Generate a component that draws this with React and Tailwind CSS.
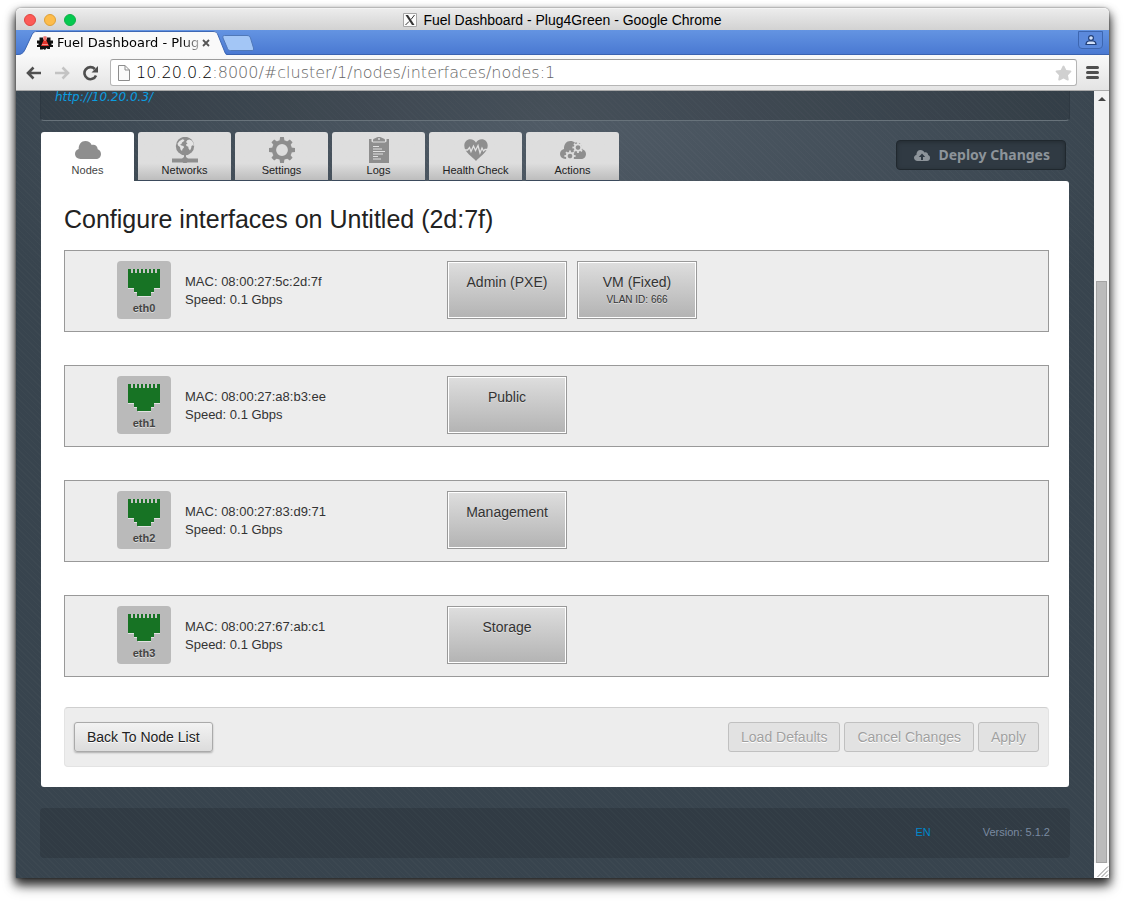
import React from "react";
import { FaStar } from "react-icons/fa";

function CloudIcon() {
  return (
    <svg viewBox="0 0 26 18" className="h-[18px] w-[26px] fill-[#8e8e8e]" aria-hidden="true">
      <path d="M5.500 18C2.300 18 0 15.700 0 12.800c0-2.400 1.500-4.300 3.700-4.900C3.500 3.300 6.400 0 10.300 0c3 0 5.300 1.600 6.400 4 3-1 6 1 6 4.200 2 .7 3.300 2.500 3.300 4.700 0 2.900-2.200 5.100-5 5.100z" />
    </svg>
  );
}

function NetworkIcon() {
  return (
    <svg viewBox="0 0 26 26" className="h-[26px] w-[26px]" aria-hidden="true">
      <circle cx="13" cy="9" r="9.200" fill="#8e8e8e" />
      <path d="M5.500 6.500 7.500 4l3-1.700 2 .7-1 1.500-1.500 1-.5 1.500-1.500.8 1.500.7 2 .5.5 1.500-1.500 1.500-.5 2-1.500-1.500-.5-2.500L6 8.500z" fill="#e4e4e4" />
      <path d="m14 5 1.500-2 2-.5 2.500 1.300 1.500 2.700.3 2.400-1.300-.7-1 .7-.3 2.100-1.200 2.500-1.500-2-.2-1.800-1.800-.7-.5-1.500 1.500-1z" fill="#e4e4e4" />
      <path d="M12 18h2v2l2 1.500h10v4H15.500l-1 .5h-3l-1-.5H0v-4h10l2-1.500z" fill="#8e8e8e" />
    </svg>
  );
}

const TEETH = [0, 45, 90, 135, 180, 225, 270, 315];

function SettingsIcon() {
  return (
    <svg viewBox="0 0 26 26" className="h-[26px] w-[26px]" aria-hidden="true">
      <circle cx="13" cy="13" r="8" fill="none" stroke="#8e8e8e" strokeWidth="4.200" />
      {TEETH.map((a) => (
        <path key={a} d="M10.500 4 11.100 0h3.800l.6 4z" fill="#8e8e8e" transform={`rotate(${a} 13 13)`} />
      ))}
    </svg>
  );
}

function LogsIcon() {
  return (
    <svg viewBox="0 0 20 26" className="h-[26px] w-[20px]" aria-hidden="true">
      <path d="M0 2h20v24H0z" fill="#8e8e8e" />
      <path d="M2.500 1.500h15V4.500l-1.500 1H4l-1.500-1z" fill="#e0e0e0" />
      <path d="M4 4.500V2.500L6 1.200C7.500.3 8.800 0 10 0s2.500.3 4 1.200l2 1.300v2z" fill="#8e8e8e" />
      <circle cx="10" cy="2" r=".9" fill="#e0e0e0" />
      <path d="M4 9.500h6M4 12h9M4 14.500h12M4 17h10M4 19.500h5M4 22h8" stroke="#e0e0e0" strokeWidth="1.200" />
    </svg>
  );
}

function HealthIcon() {
  return (
    <svg viewBox="0 0 24 22" className="h-[22px] w-[24px]" aria-hidden="true">
      <path d="M12 22C9 18.500.3 13.500.3 6.800.3 2.800 3 .3 6.300.3c2.500 0 4.700 1.200 5.700 3.500C13 1.500 15.200.3 17.700.3c3.300 0 6 2.500 6 6.500C23.700 13.500 15 18.500 12 22z" fill="#8e8e8e" />
      <path d="M0 11h3.500l2-2.500 1.500 4 2.500-5.500 2 4.500 2.500-5 2 7.500 2-5 1.500 3 1.500-1.500H24" fill="none" stroke="#e0e0e0" strokeWidth="1.300" />
    </svg>
  );
}

function SmallGear({ x, y }) {
  return (
    <g transform={`translate(${x} ${y})`}>
      <circle r="3.200" fill="none" stroke="#dedede" strokeWidth="1.800" />
      {TEETH.map((a) => (
        <path key={a} d="M-.9-3.500h1.800v-2.100h-1.800z" fill="#dedede" transform={`rotate(${a})`} />
      ))}
    </g>
  );
}

function ActionsIcon() {
  return (
    <svg viewBox="0 0 26 18" className="h-[18px] w-[26px]" aria-hidden="true">
      <path d="M5.500 18C2.300 18 0 15.700 0 12.800c0-2.400 1.500-4.300 4-4.900C3.800 3.300 6.400 0 10.300 0c2 0 3.500.6 4.700 1.800C20 .5 22.500 4 22.200 8.200c2.500.7 3.800 2.500 3.800 4.700 0 2.900-2.200 5.100-5 5.100z" fill="#8e8e8e" />
      <SmallGear x={18} y={6.5} />
      <SmallGear x={10} y={15} />
    </svg>
  );
}

function PortIcon() {
  return (
    <svg viewBox="0 0 32 28" className="h-7 w-8" aria-hidden="true" shapeRendering="crispEdges">
      <path d="M0 1h32v19h-6v4h-3v4H10v-4H6v-4H0z" fill="#e2e2e2" />
      <path d="M0 0h32v19h-6v4h-3v4H9v-4H6v-4H0z" fill="#177324" />
      <path d="M4 0v4M8 0v4M12 0v4M16 0v4M20 0v4M24 0v4M28 0v4" stroke="#c4c4c4" strokeWidth="2" />
    </svg>
  );
}

const TABS = [
  ["Nodes", CloudIcon],
  ["Networks", NetworkIcon],
  ["Settings", SettingsIcon],
  ["Logs", LogsIcon],
  ["Health Check", HealthIcon],
  ["Actions", ActionsIcon],
];

const INTERFACES = [
  { name: "eth0", mac: "08:00:27:5c:2d:7f", nets: [["Admin (PXE)"], ["VM (Fixed)", "VLAN ID: 666"]] },
  { name: "eth1", mac: "08:00:27:a8:b3:ee", nets: [["Public"]] },
  { name: "eth2", mac: "08:00:27:83:d9:71", nets: [["Management"]] },
  { name: "eth3", mac: "08:00:27:67:ab:c1", nets: [["Storage"]] },
];

function TitleBar() {
  return (
    <div className="relative flex h-[22px] items-center justify-center gap-1.5 rounded-t-[5px] border-t border-[#f4f4f4] bg-linear-to-b from-[#ececec] to-[#d2d2d2]">
      <div className="absolute left-2 flex gap-2">
        <button aria-label="Close" className="size-3 rounded-full border border-[#e0443e] bg-[#fc5b57]" />
        <button aria-label="Minimize" className="size-3 rounded-full border border-[#dea035] bg-[#fdbc4b]" />
        <button aria-label="Zoom" className="size-3 rounded-full border border-[#10b048] bg-[#05c94f]" />
      </div>
      <svg viewBox="0 0 14 14" className="h-[14px] w-[14px]" aria-hidden="true">
        <path d="M.5.5h13v13H.5z" fill="#fbfbfb" stroke="#a6a6a6" />
        <path d="m2.500 2 6.500 10h2.500L5 2z" fill="#333" />
        <path d="M11.500 2 8 6.500M6 8.500 2.500 12" stroke="#333" strokeWidth="1" />
      </svg>
      <span className="text-[14px] leading-4 text-black">Fuel Dashboard - Plug4Green - Google Chrome</span>
    </div>
  );
}

function TabStrip() {
  return (
    <div className="flex h-[25px] items-end justify-between border-b border-[#3a62b0] bg-linear-to-b from-[#6494e2] to-[#4a79d2] font-['DejaVu_Sans',sans-serif]">
      <div className="flex items-end">
        <div className="relative -mb-px h-6 w-[211px]">
          <svg viewBox="0 0 211 24" preserveAspectRatio="none" className="absolute inset-0 h-full w-full" aria-hidden="true">
            <path d="M0 24c5 0 7-1 9-5l7-15C17.500 1 18.500 0 21 0h176c3 0 4 1 5 4l6 15c1 4 2 5 3 5z" fill="#f9f9f9" />
            <path d="M0 23.500c5 0 7-1 9-5l7-15C17.500 1 18.500.5 21 .5h176c3 0 4 1 5 3.500l6 15c1 3 2 4 3 4.500" fill="none" stroke="#3e68b4" />
          </svg>
          <div className="relative flex h-6 items-center justify-between pr-[15px] pl-[21px]">
            <div className="flex items-center gap-1">
              <svg viewBox="0 0 16 14" className="h-[14px] w-4 shrink-0" aria-hidden="true">
                <path d="M2.500 1.500h3.500v2h4v-2h3.500v3H16v3h-1.500v1.500H16v2h-3v2h-2.500l-1-1L8 14l-1.500-1-1 .5H3v-2.500H0V9h1.500V7.500H0v-3h2.500z" fill="#111" />
                <path d="M6.500.5h3v4l2.500 5.500H4l2.500-5.500z" fill="#e5342c" />
                <path d="M7.500 1h1v4h-1zM5 8h6v.8H5z" fill="#f7b0ac" />
              </svg>
              <span className="text-[13px] leading-4 whitespace-nowrap text-black mask-r-from-88% mask-r-to-105%">
                Fuel Dashboard - Plug
              </span>
            </div>
            <button aria-label="Close tab" className="flex size-3 shrink-0 items-center justify-center">
              <svg viewBox="0 0 8 8" className="size-2" aria-hidden="true">
                <path d="m1 1 6 6M7 1 1 7" stroke="#555" strokeWidth="1.800" />
              </svg>
            </button>
          </div>
        </div>
        <button aria-label="New tab" className="mb-[3px] -ml-[5px]">
          <svg viewBox="0 0 32 16" className="h-4 w-8" aria-hidden="true">
            <path d="M2.500.5H25c2 0 3 1 3.500 2.500L31.500 13c.4 1.500 0 2.500-1.500 2.500H8.500C7 15.500 6 15 5.500 13.500L1 3C.5 1.500 1 .5 2.500.5z" fill="#a3c6f6" stroke="#5078b8" />
          </svg>
        </button>
      </div>
      <button aria-label="Profile" className="mr-1.5 mb-[5px] flex h-[18px] w-[25px] items-center justify-center rounded-b border border-[#3d66b0] bg-[#5b89dc]">
        <svg viewBox="0 0 12 12" className="size-3" aria-hidden="true">
          <path d="M1 10.500c0-2 1-3.200 2.700-3.500h4.600C10 7.300 11 8.500 11 10.500z" fill="#d3e2fa" stroke="#223f78" strokeWidth="1.200" />
          <circle cx="6" cy="4" r="2.400" fill="#d3e2fa" stroke="#223f78" strokeWidth="1.200" />
        </svg>
      </button>
    </div>
  );
}

function Toolbar() {
  return (
    <div className="flex h-9 items-center border-b border-[#a9a9a9] bg-linear-to-b from-[#f9f9f9] to-[#e4e4e4] px-2.5 font-['DejaVu_Sans',sans-serif]">
      <button aria-label="Back">
        <svg viewBox="0 0 16 14" className="h-[14px] w-4" fill="none" aria-hidden="true">
          <path d="M15 7H2M7.500 1.500 2 7l5.500 5.500" stroke="#4f4f4f" strokeWidth="2.600" />
        </svg>
      </button>
      <button aria-label="Forward" className="ml-3">
        <svg viewBox="0 0 16 14" className="h-[14px] w-4" fill="none" aria-hidden="true">
          <path d="M1 7h13M8.500 1.500 14 7l-5.500 5.500" stroke="#c3c3c3" strokeWidth="2.600" />
        </svg>
      </button>
      <button aria-label="Reload" className="ml-3">
        <svg viewBox="0 0 17 16" className="h-4 w-[17px]" fill="none" aria-hidden="true">
          <path d="M14 10.500A6 6 0 1 1 12.800 4" stroke="#4f4f4f" strokeWidth="2.600" />
          <path d="M16 1v6.500H9.500z" fill="#4f4f4f" />
        </svg>
      </button>
      <div className="ml-[11px] flex h-[27px] min-w-0 flex-1 items-center rounded-[3px] border border-[#b5b5b5] border-t-[#9c9c9c] bg-white pr-1 pl-[7px]">
        <svg viewBox="0 0 12 16" className="mr-[6px] h-4 w-3 shrink-0" aria-hidden="true">
          <path d="M.5.5H7L11.500 5v10.500H.5z" fill="#fbfbfb" stroke="#8d8d8d" />
          <path d="M7 .5V5h4.500" fill="none" stroke="#8d8d8d" />
        </svg>
        <div className="min-w-0 flex-1 truncate text-[16px] leading-6 font-extralight text-[#666]">
          <span className="text-black">10.20.0.2</span>:8000/#cluster/1/nodes/interfaces/nodes:1
        </div>
        <button aria-label="Bookmark">
          <FaStar className="h-4 w-[17px] text-[#d0d0d0]" />
        </button>
      </div>
      <button aria-label="Menu" className="ml-[9px] flex w-[13px] flex-col gap-0.5">
        <span className="h-[3px] rounded-full bg-[#4f4f4f]" />
        <span className="h-[3px] rounded-full bg-[#4f4f4f]" />
        <span className="h-[3px] rounded-full bg-[#4f4f4f]" />
      </button>
    </div>
  );
}

function Interface({ name, mac, nets }) {
  return (
    <section className="flex border border-[#999] bg-[#ededed] pt-2.5 pb-3 pl-[52px]">
      <div className="flex h-[58px] w-[54px] flex-col items-center rounded bg-[#bababa] pt-2">
        <PortIcon />
        <span className="mt-1 text-[11px] leading-[14px] font-bold text-[#444] text-shadow-[0_1px_0_#ddd]">{name}</span>
      </div>
      <div className="ml-3.5 w-[262px] pt-3 text-[13px] leading-[18px] text-[#333]">
        <p>MAC: {mac}</p>
        <p>Speed: 0.1 Gbps</p>
      </div>
      <div className="flex gap-2.5">
        {nets.map(([label, vlan]) => (
          <div
            key={label}
            className="h-[58px] w-[120px] border border-[#999] bg-linear-to-b from-[#dedede] to-[#b3b3b3] pt-[11px] text-center text-[#333] shadow-[inset_0_0_0_1px_#fff] text-shadow-[0_1px_0_#ddd]"
          >
            <p className="text-[14px] leading-[18px]">{label}</p>
            {vlan && <p className="text-[10px] leading-[18px]">{vlan}</p>}
          </div>
        ))}
      </div>
    </section>
  );
}

function FormButton({ children, disabled }) {
  return (
    <button
      disabled={disabled}
      className={
        disabled
          ? "h-[30px] rounded-[3px] border border-[#c0c0c0] bg-[#e2e2e2] px-3 text-[14px] leading-5 text-[#a0a0a0] text-shadow-[0_1px_0_#fff]"
          : "h-[30px] rounded-[3px] border border-[#aaa] bg-linear-to-b from-[#f3f3f3] to-[#dcdcdc] px-3 text-[14px] leading-5 text-[#222] shadow-[0_1px_2px_#0004] text-shadow-[0_1px_0_#fff]"
      }
    >
      {children}
    </button>
  );
}

function Scrollbar() {
  return (
    <div className="flex w-[15px] shrink-0 flex-col bg-[#f1f1f1]">
      <button aria-label="Scroll up" className="flex h-[15px] items-center justify-center">
        <svg viewBox="0 0 8 4" className="h-1 w-2" aria-hidden="true">
          <path d="M4 0 8 4H0z" fill="#444" />
        </svg>
      </button>
      <div className="flex-[175]" />
      <div className="mx-0.5 flex-[582] border border-[#a4a4a4] bg-[#bbb]" />
      <svg viewBox="0 0 15 15" className="size-[15px] bg-white" aria-hidden="true">
        <path d="M3.500 14 14 3.500M7.500 14 14 7.500M11.500 14l2.500-2.500" stroke="#8a8a8a" />
      </svg>
    </div>
  );
}

export default function App() {
  return (
    <div className="min-h-screen bg-white px-4 pt-2 pb-6 font-['Liberation_Sans',sans-serif]">
      <div className="rounded-t-[5px] shadow-[0_0_2px_#0008,0_5px_10px_1px_#000b,0_8px_14px_#0006]">
        <TitleBar />
        <TabStrip />
        <Toolbar />
        <div className="flex">
          <div className="min-w-0 flex-1 overflow-hidden bg-[repeating-linear-gradient(45deg,#ffffff05_0_1px,transparent_1px_4px),radial-gradient(ellipse_600px_300px_at_50%_30px,#505b66,#38444e)] px-6 pb-5">
            <header className="-mt-1 rounded-b border border-t-0 border-[#2f3942] border-b-[#68737b] bg-[#0000001f] px-3.5 pb-[13px] font-['DejaVu_Sans',sans-serif] text-[12px] leading-5 italic">
              <a href="http://10.20.0.3/" className="text-[#0b9ee0]">http://10.20.0.3/</a>
            </header>
            <div className="flex items-end justify-between px-px pt-[11px]">
              <div role="tablist" className="flex gap-1">
                {TABS.map(([label, Icon], i) => (
                  <button
                    key={label}
                    role="tab"
                    aria-selected={i === 0}
                    className={
                      i === 0
                        ? "flex h-[49px] w-[93px] flex-col items-center rounded-t-[3px] bg-white text-[#444]"
                        : "flex h-[49px] w-[93px] flex-col items-center rounded-t-[3px] border-b border-[#3b4a5c] bg-linear-to-b from-[#dedede] from-65% to-[#bdbdbd] text-[#222]"
                    }
                  >
                    <span className="mt-[5px] flex h-[26px] items-center">
                      <Icon />
                    </span>
                    <span className="text-[11px] leading-[14px]">{label}</span>
                  </button>
                ))}
              </div>
              <button
                disabled
                className="mr-[3px] mb-[11px] flex h-[30px] items-center gap-1.5 rounded border border-[#20282e] bg-[#303a43] px-[15px] font-['Noto_Sans',sans-serif] text-[14px] leading-5 font-bold text-[#8d949a] shadow-[inset_0_1px_4px_#0004]"
              >
                <svg viewBox="0 0 16 11" className="mx-0.5 h-[11px] w-4" aria-hidden="true">
                  <path d="M3.500 11C1.500 11 0 9.700 0 7.800 0 6.300 1 5.200 2.400 4.900 2.300 2 4.100 0 6.500 0c1.900 0 3.300 1 4 2.500 1.900-.6 3.600.6 3.600 2.600C15.300 5.500 16 6.600 16 7.900 16 9.700 14.700 11 13 11z" fill="#8d949a" />
                  <path d="M8 3.500 4.800 7H7v3h2V7h2.200z" fill="#303a43" />
                </svg>
                Deploy Changes
              </button>
            </div>
            <main className="mx-px rounded-tr-[3px] rounded-b-[3px] bg-white pt-[22px] pr-5 pb-5 pl-[23px]">
              <h1 className="text-[25px] leading-8 text-[#222]">Configure interfaces on Untitled (2d:7f)</h1>
              <div className="mt-[15px] flex flex-col gap-[33px]">
                {INTERFACES.map((nic) => (
                  <Interface key={nic.name} {...nic} />
                ))}
              </div>
              <div className="mt-[30px] flex items-center justify-between rounded-[4px] border border-[#e3e3e3] border-t-[#cfcfcf] bg-[#ededed] px-[9px] py-3.5">
                <FormButton>Back To Node List</FormButton>
                <div className="flex gap-1">
                  <FormButton disabled>Load Defaults</FormButton>
                  <FormButton disabled>Cancel Changes</FormButton>
                  <FormButton disabled>Apply</FormButton>
                </div>
              </div>
            </main>
            <footer className="mt-[21px] flex h-[50px] items-center justify-end gap-[52px] rounded bg-[#0000001f] pr-5 pb-0.5 text-[11px] leading-4">
              <a href="#language" className="text-[#0088cc]">EN</a>
              <span className="text-[#7a8aa0]">Version: 5.1.2</span>
            </footer>
          </div>
          <Scrollbar />
        </div>
      </div>
    </div>
  );
}
